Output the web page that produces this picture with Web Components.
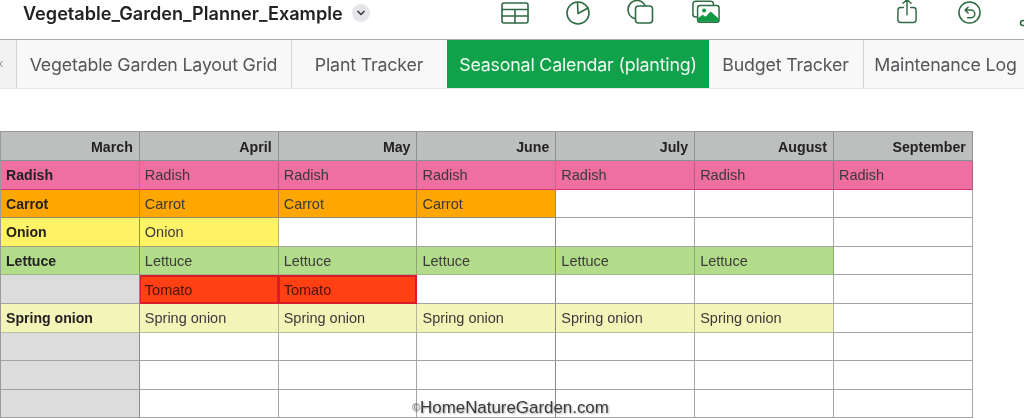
<!DOCTYPE html>
<html lang="en">
<head>
<meta charset="utf-8">
<title>Vegetable Garden Planner</title>
<style>
    html, body {
        margin: 0;
        height: 418px;
        overflow: hidden;
        background: #fff;
        font-family: "Liberation Sans", Arial, sans-serif;
    }
</style>
</head>
<body>
<planner-app>
    <title-bar slot="top" name="Vegetable_Garden_Planner_Example"></title-bar>
    <sheet-tabs slot="top">
        <sheet-tab><svg width="3" height="8" viewBox="0 0 3 8" style="display:block"><path d="M2.500 1 0 4l2.500 3" fill="none" stroke="#8a8a8a" stroke-width="1"/></svg></sheet-tab>
        <sheet-tab>Vegetable Garden Layout Grid</sheet-tab>
        <sheet-tab>Plant Tracker</sheet-tab>
        <sheet-tab active>Seasonal Calendar (planting)</sheet-tab>
        <sheet-tab>Budget Tracker</sheet-tab>
        <sheet-tab>Maintenance Log</sheet-tab>
    </sheet-tabs>
    <calendar-table id="calendar"></calendar-table>
    <water-mark><span style="font-size:11px;color:#777;vertical-align:2px">©</span>HomeNatureGarden.com</water-mark>
</planner-app>

<script>
const ICONS = {
    table: `<svg width="28" height="22" viewBox="0 0 28 22"><rect x="1" y="1" width="26" height="20" rx="2"/><path d="M1 7.5h26M1 14h26M14 7.5V21"/></svg>`,
    pie: `<svg width="24" height="24" viewBox="0 0 24 24"><circle cx="12" cy="12" r="11"/><path d="M11.5 1.5 12 12.5 22 7"/></svg>`,
    shapes: `<svg width="27" height="24" viewBox="0 0 27 24"><path d="M7.5 18.5C3.5 17.300 1 13.500 1 9.500 1 4.500 5 .5 10 .5c3.500 0 6.500 2 8 5"/><rect x="8.500" y="6" width="17" height="17" rx="3"/></svg>`,
    media: `<svg width="28" height="23" viewBox="0 0 30 24"><path d="M5 18H4a3 3 0 0 1-3-3V4a3 3 0 0 1 3-3h16a3 3 0 0 1 3 3v1"/><rect x="6" y="5.500" width="23" height="18" rx="2.500"/><circle cx="13" cy="11" r="2.200" class="solid"/><path class="solid" d="M6.500 22v-3l5-3.500 3 2 5.500-5.500 8.500 7.500V22a1 1 0 0 1-1 1H7.500a1 1 0 0 1-1-1z"/></svg>`,
    share: `<svg width="20" height="25" viewBox="0 0 22 26"><path d="M7 8.500H4a3 3 0 0 0-3 3V22a3 3 0 0 0 3 3h14a3 3 0 0 0 3-3V11.500a3 3 0 0 0-3-3h-3M11 16.500V0M6.500 4 11 0l4.500 4"/></svg>`,
    undo: `<svg width="23" height="23" viewBox="0 0 24 24"><circle cx="12" cy="12" r="11"/><path d="M10.500 6.500 7.500 9.500l3 3M7.500 9.500H13.500a3.700 3.700 0 0 1 0 8H10"/></svg>`,
    more: `<svg width="24" height="24" viewBox="0 0 24 24"><circle cx="3" cy="22" r="2.500"/></svg>`
};

class PlannerApp extends HTMLElement {
    constructor() {
        super();
        this.attachShadow({mode: "open"});
        this.shadowRoot.innerHTML = `
            <style>
                :host {
                    display: block;
                    position: relative;
                    width: 1024px;
                    height: 418px;
                    overflow: hidden;
                    filter: blur(.35px);
                }
                main {
                    padding-top: 42px;
                }
            </style>
            <slot name="top"></slot>
            <main><slot></slot></main>
        `;
    }
}

class TitleBar extends HTMLElement {
    constructor() {
        super();
        this.attachShadow({mode: "open"});
        const tool = n => `<span class="tool ${n}">${ICONS[n]}</span>`;
        this.shadowRoot.innerHTML = `
            <style>
                :host {
                    display: flex;
                    align-items: flex-start;
                    height: 39px;
                    box-sizing: border-box;
                    padding-left: 23px;
                    overflow: hidden;
                    color: #222;
                }
                h1 {
                    flex: none;
                    margin: 2px 0 0;
                    font: 600 18.100px/22px Inter, "Liberation Sans", sans-serif;
                    width: 329px;
                    white-space: nowrap;
                }
                .chevron {
                    flex: none;
                    width: 18px;
                    height: 18px;
                    margin-top: 4px;
                    border-radius: 50%;
                    background: #e6e6ea;
                    display: flex;
                    align-items: center;
                    justify-content: center;
                }
                .chevron svg {
                    fill: none;
                    stroke: #333;
                    stroke-width: 1.500;
                }
                .tool {
                    display: block;
                    flex: none;
                }
                .tool svg {
                    display: block;
                    fill: none;
                    stroke: #2f6b43;
                    stroke-width: 1.600;
                    stroke-linecap: round;
                    stroke-linejoin: round;
                    overflow: visible;
                }
                .tool svg .solid {
                    fill: #119a45;
                    stroke: none;
                }
                .table { margin: 2px 0 0 131px; }
                .pie { margin: 1px 0 0 37px; }
                .shapes { margin: 0 0 0 37px; }
                .media { margin: 0 0 0 38px; }
                .share { margin: -1px 0 0 177px; }
                .undo { margin: 1px 0 0 41px; }
                .more { margin: 1px 0 0 39px; }
            </style>
            <h1>${this.getAttribute("name")}</h1>
            <span class="chevron"><svg width="10" height="6" viewBox="0 0 10 6"><path d="M1.500 1 5 4.500 8.500 1"/></svg></span>
            ${["table", "pie", "shapes", "media", "share", "undo", "more"].map(tool).join("")}
        `;
    }
}

class SheetTabs extends HTMLElement {
    constructor() {
        super();
        this.attachShadow({mode: "open"});
        this.shadowRoot.innerHTML = `
            <style>
                :host {
                    display: grid;
                    grid-template-columns: 17px 275px 156px 261px 155px 160px;
                    height: 50px;
                    box-sizing: border-box;
                    border-top: 1px solid #a9a9a9;
                    border-bottom: 1px solid #e6e6e6;
                    background: #f8f8f8;
                }
            </style>
            <slot></slot>
        `;
    }
}

class SheetTab extends HTMLElement {
    constructor() {
        super();
        this.attachShadow({mode: "open"});
        this.shadowRoot.innerHTML = `
            <style>
                :host {
                    display: flex;
                    align-items: center;
                    justify-content: center;
                    box-sizing: border-box;
                    margin-left: -1px;
                    border-right: 1px solid #d2d2d2;
                    font: 400 17.800px Inter, "Liberation Sans", sans-serif;
                    letter-spacing: -.18px;
                    color: #55555a;
                    white-space: nowrap;
                }
                :host(:first-child) {
                    margin-left: 0;
                    justify-content: flex-start;
                    background: #f1f1f1;
                }
                :host(:last-child) {
                    border-right: 0;
                    padding-left: 4px;
                }
                :host([active]) {
                    background: #0fa24a;
                    color: #f1f7f1;
                    border-right: 0;
                }
            </style>
            <slot></slot>
        `;
    }
}

class CalendarTable extends HTMLElement {
    constructor() {
        super();
        this.attachShadow({mode: "open"});
        this.shadowRoot.innerHTML = `
            <style>
                :host {
                    display: grid;
                    grid-template-columns: repeat(7, 138.830px);
                    grid-template-rows: 29px repeat(9, 28.600px);
                    width: 973px;
                    border-top: 1px solid #9a9a9a;
                    border-left: 1px solid #9a9a9a;
                    box-sizing: border-box;
                }
            </style>
            <slot></slot>
        `;
    }
}

class CalCell extends HTMLElement {
    constructor() {
        super();
        this.attachShadow({mode: "open"});
        this.shadowRoot.innerHTML = `
            <style>
                :host {
                    display: flex;
                    align-items: center;
                    box-sizing: border-box;
                    min-width: 0;
                    padding: 1px 5px 0 5px;
                    border-right: 1px solid var(--line, #a6a6a6);
                    border-bottom: 1px solid var(--under, #a2a2a2);
                    background: var(--fill, #fff);
                    font: 400 14.500px "Liberation Sans", Arial, sans-serif;
                    color: #3a3a3a;
                    white-space: nowrap;
                }
                :host([head]) {
                    justify-content: flex-end;
                    padding-right: 6px;
                    font-weight: 700;
                    font-size: 14.200px;
                    color: #222;
                    --fill: #bdbfbe;
                    --line: #8d9191;
                    --under: #7f9490;
                }
                :host([label]) {
                    font-weight: 700;
                    font-size: 14.100px;
                    color: #222;
                }
                :host([tone="radish"]) { --fill: #ee6fa0; --line: #a8667f; --under: #d8337e; }
                :host([tone="carrot"]) { --fill: #fea602; --line: #b7812a; --under: #8f8a6a; }
                :host([tone="onion"]) { --fill: #fef365; --line: #b9b36a; --under: #a2a27e; }
                :host([tone="lettuce"]) { --fill: #b3dc8a; --line: #8fa67a; --under: #9fb886; }
                :host([tone="tomato"]) {
                    --fill: #ff3f14;
                    color: #4a1408;
                    border: 2px solid #d81c2a;
                    border-left-width: 1px;
                    padding-left: 4px;
                }
                :host([tone="spring"]) { --fill: #f3f5b8; --line: #b5b5a0; --under: #bdbd9f; }
                :host([tone="blank"]) { --fill: #dcdcdc; --under: #a2a2a2; }
                :host([strong]) { --line: #8b8b8b; }
            </style>
            <slot></slot>
        `;
    }
}

class WaterMark extends HTMLElement {
    constructor() {
        super();
        this.attachShadow({mode: "open"});
        this.shadowRoot.innerHTML = `
            <style>
                :host {
                    position: absolute;
                    left: 412px;
                    top: 398px;
                    font: 400 16.900px/19px "Liberation Sans", Arial, sans-serif;
                    color: #3a3a3a;
                    text-shadow: 1px 1px 2px rgba(0, 0, 0, .35);
                    white-space: nowrap;
                }
            </style>
            <slot></slot>
        `;
    }
}

customElements.define("planner-app", PlannerApp);
customElements.define("title-bar", TitleBar);
customElements.define("sheet-tabs", SheetTabs);
customElements.define("sheet-tab", SheetTab);
customElements.define("calendar-table", CalendarTable);
customElements.define("cal-cell", CalCell);
customElements.define("water-mark", WaterMark);

//row label, tone and how many month cells carry the tone
const months = ["March", "April", "May", "June", "July", "August", "September"];
const rows = [
    ["Radish", "radish", 6],
    ["Carrot", "carrot", 3],
    ["Onion", "onion", 1],
    ["Lettuce", "lettuce", 5],
    ["", "tomato", 2],
    ["Spring onion", "spring", 5],
    ["", "", 0],
    ["", "", 0],
    ["", "", 0]
];

const calendar = document.getElementById("calendar");

function addCell(text, attrs) {
    const cell = document.createElement("cal-cell");
    cell.textContent = text;
    for (const key in attrs) cell.setAttribute(key, attrs[key]);
    calendar.appendChild(cell);
}

months.forEach(m => addCell(m, {head: ""}));

rows.forEach(([name, tone, span]) => {
    addCell(name, {label: "", strong: "", tone: name ? tone : "blank"});
    for (let i = 0; i < 6; i++) {
        const attrs = i == 2 ? {strong: ""} : {};
        if (i < span) attrs.tone = tone;
        addCell(i < span ? (name || "Tomato") : "", attrs);
    }
});
</script>
</body>
</html>
